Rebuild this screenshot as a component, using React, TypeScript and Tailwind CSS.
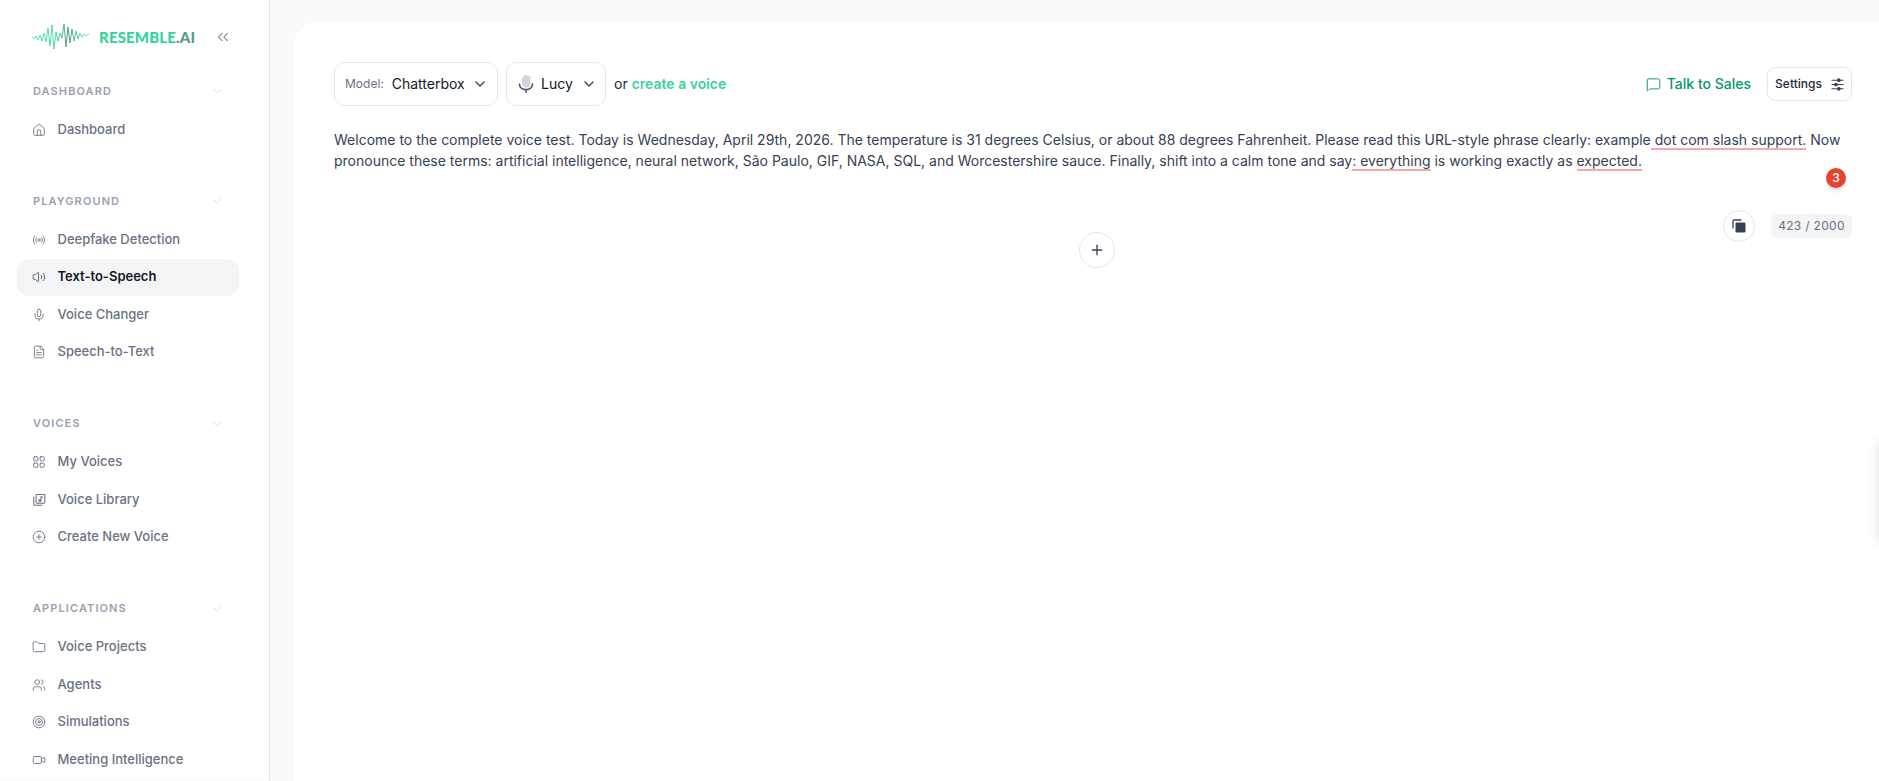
import {
  ChevronDown,
  ChevronsLeft,
  CirclePlus,
  FileText,
  Folder,
  House,
  LayoutGrid,
  MessageSquare,
  Mic,
  Plus,
  Radio,
  Target,
  Users,
  Video,
  Volume2,
  type LucideIcon,
} from "lucide-react";
import type { ComponentType } from "react";

type IconProps = { size?: number; strokeWidth?: number; className?: string };

function LibraryIcon({ size = 14, className }: IconProps) {
  return (
    <svg width={size} height={size} viewBox="0 0 24 24" fill="none" stroke="currentColor" strokeWidth={1.8} strokeLinecap="round" strokeLinejoin="round" className={className}>
      <rect x="7" y="2.5" width="15" height="15" rx="1.5" />
      <path d="M3 7v12.5A1.5 1.5 0 0 0 4.5 21H17" />
      <path d="M15.5 6.5v6.5" />
      <path d="M15.5 6.5l2.5 1" />
      <circle cx="13.5" cy="13" r="2" />
    </svg>
  );
}

type Item = { label: string; icon: LucideIcon | ComponentType<IconProps>; active?: boolean };

const SECTIONS: { title: string; items: Item[] }[] = [
  { title: "Dashboard", items: [{ label: "Dashboard", icon: House }] },
  {
    title: "Playground",
    items: [
      { label: "Deepfake Detection", icon: Radio },
      { label: "Text-to-Speech", icon: Volume2, active: true },
      { label: "Voice Changer", icon: Mic },
      { label: "Speech-to-Text", icon: FileText },
    ],
  },
  {
    title: "Voices",
    items: [
      { label: "My Voices", icon: LayoutGrid },
      { label: "Voice Library", icon: LibraryIcon },
      { label: "Create New Voice", icon: CirclePlus },
    ],
  },
  {
    title: "Applications",
    items: [
      { label: "Voice Projects", icon: Folder },
      { label: "Agents", icon: Users },
      { label: "Simulations", icon: Target },
      { label: "Meeting Intelligence", icon: Video },
    ],
  },
];

// wave peaks read off the logo, x then y
const WAVE = [
  [0, 13], [2, 15], [4, 12], [6, 16], [8, 11], [10, 17], [12, 9], [14, 18], [16, 4], [18, 22], [20, 1], [22, 25],
  [24, 8], [26, 17], [28, 9], [30, 14], [32, 0], [34, 23], [36, 3], [38, 19], [40, 5], [42, 17], [44, 7], [46, 15],
  [48, 9], [50, 13], [52, 10], [54, 12], [57, 10],
];

const WAVE_PATH = WAVE.map(([x, y], i) => `${i === 0 ? "M" : "L"}${x} ${y}`).join("");

function Logo() {
  return (
    <div className="flex items-center gap-[9px]">
      <svg width="58" height="26" viewBox="0 0 58 26" fill="none" strokeLinecap="round" strokeLinejoin="round">
        <defs>
          <linearGradient id="wave" x1="0" y1="0" x2="58" y2="0" gradientUnits="userSpaceOnUse">
            <stop offset="0" stopColor="#5ee0b0" />
            <stop offset="0.45" stopColor="#34d399" />
            <stop offset="0.62" stopColor="#3f8f78" />
            <stop offset="0.8" stopColor="#5bbfa0" />
            <stop offset="1" stopColor="#6ee7b7" />
          </linearGradient>
        </defs>
        <path d={WAVE_PATH} stroke="url(#wave)" strokeWidth="0.9" />
      </svg>
      <span className="text-[15px] font-black tracking-[0.01em] text-[#34d399] font-['Lato','Noto_Sans',sans-serif]">
        RESEMBLE<span className="text-[#4f9d87]">.AI</span>
      </span>
    </div>
  );
}

function Sidebar() {
  return (
    <aside className="relative flex h-full w-[270px] shrink-0 flex-col overflow-hidden border-r border-gray-200 bg-white">
      <div className="flex h-[74px] shrink-0 items-center justify-between pl-[32px] pr-[37px]">
        <Logo />
        <ChevronsLeft size={18} strokeWidth={1.4} className="text-gray-500" />
      </div>
      <nav className="flex flex-col gap-[36px] pb-4">
        {SECTIONS.map((section) => (
          <div key={section.title} className="flex flex-col">
            <div className="flex h-[34px] items-center justify-between pl-[33px] pr-[45px]">
              <span className="text-[11px] font-semibold uppercase tracking-[0.1em] text-gray-400">{section.title}</span>
              <ChevronDown size={14} strokeWidth={1.5} className="text-gray-300" />
            </div>
            <ul className="flex flex-col gap-[0.5px] pl-[17px] pr-[30px] pt-[3px]">
              {section.items.map((item) => (
                <li
                  key={item.label}
                  className={`flex h-[37px] items-center gap-[11.5px] rounded-xl pl-[15px] text-[13px] font-medium ${
                    item.active ? "bg-gray-100 font-semibold text-gray-900" : "text-gray-500"
                  }`}
                >
                  <item.icon size={14} strokeWidth={1.5} className={item.active ? "text-gray-600" : "text-gray-500"} />
                  {item.label}
                </li>
              ))}
            </ul>
          </div>
        ))}
      </nav>
      <div className="absolute inset-x-0 bottom-0 h-[4px] bg-gradient-to-t from-gray-50 to-white" />
    </aside>
  );
}

function MicFilled() {
  return (
    <svg width="18" height="20" viewBox="0 0 18 20" fill="none">
      <rect x="5" y="1" width="8.5" height="12.5" rx="4.2" fill="#d1d5db" />
      <path d="M2.5 10c0 3.4 2.9 5.6 6.5 5.6s6.5-2.2 6.5-5.6" stroke="#4b5563" strokeWidth="1.6" strokeLinecap="round" />
      <path d="M9 15.5v3.2" stroke="#4b5563" strokeWidth="1.6" />
    </svg>
  );
}

function CopyFilled() {
  return (
    <svg width="14" height="14" viewBox="0 0 14 14" fill="none">
      <path d="M1 9V2.2C1 1.5 1.5 1 2.2 1H9" stroke="#374151" strokeWidth="1.3" strokeLinecap="round" />
      <rect x="3.5" y="3.5" width="10" height="10" rx="1.2" fill="#374151" />
    </svg>
  );
}

function SlidersDots() {
  return (
    <svg width="13" height="13" viewBox="0 0 13 13" fill="#374151" stroke="#374151" strokeWidth="1.1">
      <path d="M0.5 2.2h12M0.5 6.5h12M0.5 10.8h12" />
      <circle cx="7.8" cy="2.2" r="1.3" />
      <circle cx="5" cy="6.5" r="1.3" />
      <circle cx="7.8" cy="10.8" r="1.3" />
    </svg>
  );
}

function Toolbar() {
  return (
    <div className="flex items-center justify-between">
      <div className="flex items-center">
        <button className="flex h-[44px] w-[164px] items-center rounded-[10px] border border-gray-200 bg-white pl-[10px] text-sm text-gray-900">
          <span className="mr-[8px] text-xs text-gray-500">Model:</span>
          Chatterbox
          <ChevronDown size={16} className="ml-[7px] text-gray-700" />
        </button>
        <button className="ml-[8px] flex h-[44px] w-[100px] items-center rounded-[10px] border border-gray-200 bg-white pl-[10px] text-sm text-gray-900">
          <MicFilled />
          <span className="ml-[6px]">Lucy</span>
          <ChevronDown size={16} className="ml-[8px] text-gray-700" />
        </button>
        <span className="ml-[8px] text-sm text-gray-800">or</span>
        <span className="ml-[4px] text-sm font-semibold text-[#3dd1a0]">create a voice</span>
      </div>
      <div className="flex items-center">
        <MessageSquare size={15} strokeWidth={1.5} className="text-[#059669]" />
        <span className="ml-[6px] text-sm font-medium text-[#059669]">Talk to Sales</span>
        <button className="ml-[16px] flex h-[34px] w-[85px] items-center justify-center gap-[9px] rounded-lg border border-gray-200 bg-white text-xs font-medium text-gray-800">
          Settings
          <SlidersDots />
        </button>
      </div>
    </div>
  );
}

function Flag({ children }: { children: string }) {
  return <span className="border-b-2 border-[#f9a8a8]">{children}</span>;
}

function Editor() {
  return (
    <div className="mt-[23px]">
      <p className="text-sm leading-[21px] text-gray-700">
        Welcome to the complete voice test. Today is Wednesday, April 29th, 2026. The temperature is 31 degrees Celsius, or about 88 degrees Fahrenheit. Please read this URL-style phrase clearly: example
        <Flag> dot com slash support.</Flag> Now pronounce these terms: artificial intelligence, neural network, São Paulo, GIF, NASA, SQL, and Worcestershire sauce. Finally, shift into a calm tone and say
        <Flag>: everything</Flag> is working exactly as <Flag>expected.</Flag>
      </p>
      <div className="-mt-[3px] flex justify-end pr-[6px]">
        <span className="flex h-5 w-5 items-center justify-center rounded-full bg-[#e5432d] text-xs font-medium text-white shadow-md">3</span>
      </div>
      <div className="mt-[22px] flex items-center justify-end gap-[16px]">
        <button className="flex h-8 w-8 items-center justify-center rounded-full border border-gray-200 bg-white">
          <CopyFilled />
        </button>
        <span className="flex h-6 w-[81px] items-center justify-center rounded-md bg-gray-100 text-xs tracking-wide text-gray-500">423 / 2000</span>
      </div>
      <div className="-mt-[10px] flex justify-center pl-[7px]">
        <button className="flex h-9 w-9 items-center justify-center rounded-full border border-gray-200 bg-white">
          <Plus size={16} className="text-gray-700" />
        </button>
      </div>
    </div>
  );
}

export default function App() {
  return (
    <div className="relative flex h-screen w-full overflow-hidden bg-[#f9fafb] font-['Inter',sans-serif]">
      <Sidebar />
      <main className="ml-[24px] mt-[22px] flex-1 rounded-tl-3xl bg-white pl-[40px] pr-[27px] pt-[40px]">
        <Toolbar />
        <Editor />
      </main>
      {/* panel tucked past the right edge, only its shadow shows */}
      <div className="absolute right-[-20px] top-[442px] h-[100px] w-[20px] bg-white shadow-[0_0_12px_rgba(0,0,0,0.14)]" />
    </div>
  );
}
